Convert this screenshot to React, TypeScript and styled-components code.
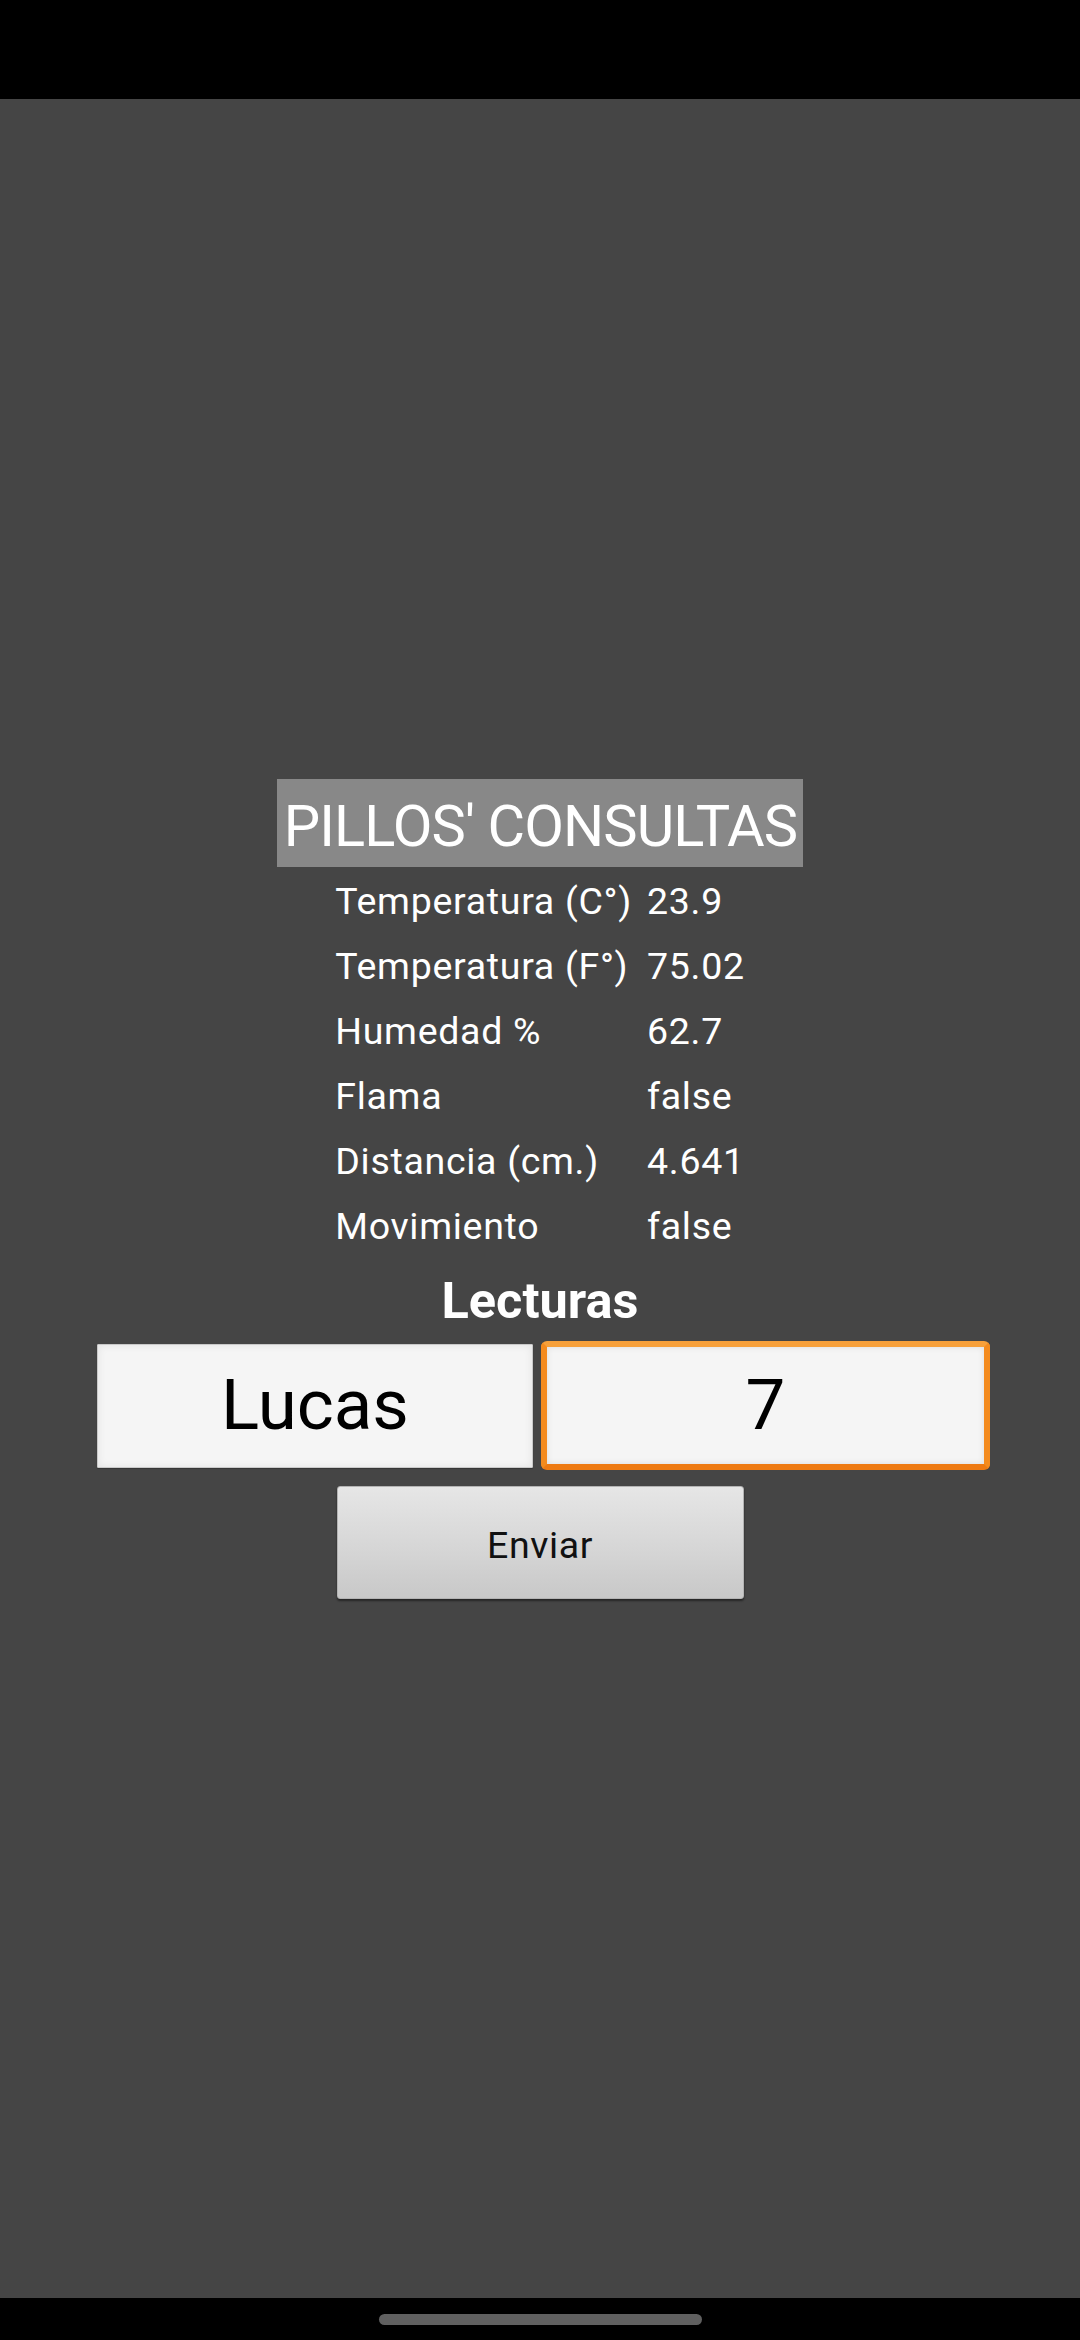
import React from "react";
import styled, { createGlobalStyle } from "styled-components";

const GlobalStyle = createGlobalStyle`
  html, body {
    margin: 0;
    padding: 0;
    background: #000;
  }
  * { box-sizing: border-box; }
  body {
    font-family: Roboto, "Noto Sans", "Liberation Sans", sans-serif;
  }
`;

const Screen = styled.div`
  width: 1080px;
  height: 2340px;
  display: flex;
  flex-direction: column;
  overflow: hidden;
`;

const StatusBar = styled.div`
  height: 99px;
  flex: none;
  background: #000;
`;

const Content = styled.main`
  flex: 1;
  background: #454545;
  display: flex;
  flex-direction: column;
  align-items: center;
  padding-top: 680px;
`;

const Title = styled.h1`
  margin: 0;
  background: #888888;
  color: #ffffff;
  font-family: Roboto, sans-serif;
  font-weight: 400;
  font-size: 57.75px;
  letter-spacing: -0.9px;
  line-height: 68px;
  padding: 13px 6px 7px 7px;
  white-space: nowrap;
`;

const ReadingsTable = styled.div`
  margin-top: 2px;
  display: grid;
  grid-template-columns: auto auto;
  column-gap: 15px;
  justify-content: center;
  width: 100%;
`;

const Cell = styled.span`
  color: #ffffff;
  font-family: Roboto, sans-serif;
  font-size: 37.5px;
  letter-spacing: 0.7px;
  line-height: 65px;
  white-space: nowrap;
`;

const SectionHeading = styled.h2`
  margin: 12px 0 0;
  color: #ffffff;
  font-family: Roboto, sans-serif;
  font-weight: 700;
  font-size: 50.5px;
  line-height: 60px;
`;

const InputRow = styled.div`
  margin-top: 10px;
  width: 100%;
  display: flex;
  align-items: center;
  gap: 8px;
  padding-left: 97px;
`;

const Field = styled.div<{ $focused?: boolean; $width: number }>`
  width: ${(p) => p.$width}px;
  height: ${(p) => (p.$focused ? 129 : 124)}px;
  display: flex;
  align-items: center;
  justify-content: center;
  background: #f5f5f5;
  color: #000;
  font-family: Roboto, sans-serif;
  font-size: 70.875px;
  line-height: 1;
  border: ${(p) => (p.$focused ? "6px solid #f48b1e" : "1px solid #c9c9c9")};
  border-radius: ${(p) => (p.$focused ? "6px" : "1px")};
  box-shadow: ${(p) =>
    p.$focused
      ? "inset 0 0 6px rgba(0,0,0,0.10)"
      : "inset 0 0 8px rgba(0,0,0,0.08), 0 1px 1px rgba(0,0,0,0.25)"};
  ${(p) =>
    p.$focused
      ? `border-top-color: #f7a03a; border-bottom-color: #ee7a12;`
      : ""}
`;

const SendButton = styled.button`
  margin-top: 16px;
  width: 407px;
  height: 113px;
  border: 1px solid #b3b3b3;
  border-radius: 3px;
  background: linear-gradient(180deg, #e6e6e6 0%, #d6d6d6 55%, #c8c8c8 100%);
  box-shadow: 0 2px 2px rgba(0, 0, 0, 0.45);
  color: #111;
  font-family: Roboto, sans-serif;
  font-size: 37.5px;
  letter-spacing: 0.6px;
  padding: 0;
  padding-top: 4px;
  cursor: pointer;
`;

const NavBar = styled.div`
  height: 42px;
  flex: none;
  background: #000;
  display: flex;
  justify-content: center;
  padding-top: 16px;
`;

const NavHandle = styled.div`
  width: 323px;
  height: 11px;
  border-radius: 6px;
  background: #606060;
`;

const rows: [string, string][] = [
  ["Temperatura (C°)", "23.9"],
  ["Temperatura (F°)", "75.02"],
  ["Humedad %", "62.7"],
  ["Flama", "false"],
  ["Distancia (cm.)", "4.641"],
  ["Movimiento", "false"],
];

export default function App() {
  return (
    <>
      <GlobalStyle />
      <Screen>
        <StatusBar />
        <Content>
          <Title>PILLOS' CONSULTAS</Title>
          <ReadingsTable>
            {rows.map(([label, value]) => (
              <React.Fragment key={label}>
                <Cell>{label}</Cell>
                <Cell>{value}</Cell>
              </React.Fragment>
            ))}
          </ReadingsTable>
          <SectionHeading>Lecturas</SectionHeading>
          <InputRow>
            <Field $width={436}>Lucas</Field>
            <Field $width={449} $focused>
              7
            </Field>
          </InputRow>
          <SendButton>Enviar</SendButton>
        </Content>
        <NavBar>
          <NavHandle />
        </NavBar>
      </Screen>
    </>
  );
}
